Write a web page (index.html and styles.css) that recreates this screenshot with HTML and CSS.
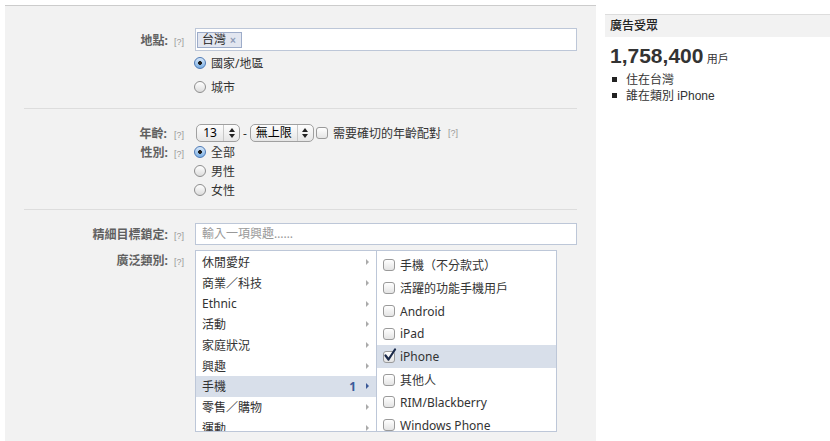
FILE: index.html
```html
<!DOCTYPE html>
<html lang="zh-Hant">
<head>
    <meta charset="UTF-8">
    <meta name="viewport" content="width=device-width, initial-scale=1.0">
    <title>廣告目標設定</title>
    <link rel="stylesheet" href="styles.css">
</head>
<body>

<div class="page">
    <div class="main">

        <!-- 地點 -->
        <div class="section sec-loc">
            <div class="row">
                <div class="lbl"><span class="name">地點:</span><span class="help">[?]</span></div>
                <div class="tokenbox">
                    <span class="token">台灣<span class="x">×</span></span>
                </div>
            </div>
            <div class="row loc-opt">
                <div class="lbl"></div>
                <span class="radio on"></span><span class="opt-text">國家/地區</span>
            </div>
            <div class="row loc-opt">
                <div class="lbl"></div>
                <span class="radio"></span><span class="opt-text">城市</span>
            </div>
        </div>

        <!-- 年齡 / 性別 -->
        <div class="section sec-age">
            <div class="row age-row">
                <div class="lbl"><span class="name">年齡:</span><span class="help">[?]</span></div>
                <div class="select s-min">
                    <span class="val">13</span>
                    <span class="arr"><svg width="6" height="10" viewBox="0 0 6 10"><polygon points="0,4 3,0 6,4" fill="#222"/><polygon points="0,6 3,10 6,6" fill="#222"/></svg></span>
                </div>
                <span class="dash">-</span>
                <div class="select s-max">
                    <span class="val">無上限</span>
                    <span class="arr"><svg width="6" height="10" viewBox="0 0 6 10"><polygon points="0,4 3,0 6,4" fill="#222"/><polygon points="0,6 3,10 6,6" fill="#222"/></svg></span>
                </div>
                <span class="check age-check"></span>
                <span class="age-text">需要確切的年齡配對</span>
                <span class="help">[?]</span>
            </div>
            <div class="row gender-row">
                <div class="lbl"><span class="name">性別:</span><span class="help">[?]</span></div>
                <span class="radio on"></span><span class="opt-text">全部</span>
            </div>
            <div class="row gender-row">
                <div class="lbl"></div>
                <span class="radio"></span><span class="opt-text">男性</span>
            </div>
            <div class="row gender-row">
                <div class="lbl"></div>
                <span class="radio"></span><span class="opt-text">女性</span>
            </div>
        </div>

        <!-- 興趣 / 類別 -->
        <div class="section sec-interest">
            <div class="row">
                <div class="lbl"><span class="name">精細目標鎖定:</span><span class="help">[?]</span></div>
                <div class="textbox">輸入一項興趣……</div>
            </div>
            <div class="row cats-row">
                <div class="lbl"><span class="name">廣泛類別:</span><span class="help">[?]</span></div>
                <div class="list cat-list">
                    <div class="cat"><span class="cat-name">休閒愛好</span><i class="tri"></i></div>
                    <div class="cat"><span class="cat-name">商業／科技</span><i class="tri"></i></div>
                    <div class="cat"><span class="cat-name">Ethnic</span><i class="tri"></i></div>
                    <div class="cat"><span class="cat-name">活動</span><i class="tri"></i></div>
                    <div class="cat"><span class="cat-name">家庭狀況</span><i class="tri"></i></div>
                    <div class="cat"><span class="cat-name">興趣</span><i class="tri"></i></div>
                    <div class="cat sel"><span class="cat-name">手機</span><b class="count">1</b><i class="tri"></i></div>
                    <div class="cat"><span class="cat-name">零售／購物</span><i class="tri"></i></div>
                    <div class="cat"><span class="cat-name">運動</span><i class="tri"></i></div>
                </div>
                <div class="list sub-list">
                    <div class="sub"><span class="check"></span><span>手機（不分款式）</span></div>
                    <div class="sub"><span class="check"></span><span>活躍的功能手機用戶</span></div>
                    <div class="sub"><span class="check"></span><span>Android</span></div>
                    <div class="sub"><span class="check"></span><span>iPad</span></div>
                    <div class="sub sel">
                        <span class="check checked"><svg width="14" height="14" viewBox="0 0 14 14"><path d="M2.5 7.5 L5.5 11.5 L12 1.5" fill="none" stroke="#1b2a4a" stroke-width="2.2" stroke-linecap="round" stroke-linejoin="round"/></svg></span>
                        <span>iPhone</span>
                    </div>
                    <div class="sub"><span class="check"></span><span>其他人</span></div>
                    <div class="sub"><span class="check"></span><span>RIM/Blackberry</span></div>
                    <div class="sub"><span class="check"></span><span>Windows Phone</span></div>
                </div>
            </div>
        </div>

    </div>

    <div class="side">
        <div class="side-head">廣告受眾</div>
        <div class="reach"><span class="num">1,758,400</span> <span class="unit">用戶</span></div>
        <ul class="crit">
            <li>住在台灣</li>
            <li>誰在類別 iPhone</li>
        </ul>
    </div>
</div>

</body>
</html>
```

FILE: styles.css
```css
body {
    margin: 0;
    background-color: #fff;
    font-family: "Noto Sans", "Noto Sans CJK TC", sans-serif;
    font-size: 12px;
    color: #333;
}
.page {
    display: flex;
    height: 441px;
    overflow: hidden;
}
.main {
    width: 591px;
    flex: none;
    margin: 5px 0 0 5px;
    background-color: #f2f2f2;
    border-top: 1px solid #ccc;
}
.section {
    margin: 0 19px;
    border-bottom: 1px solid #ddd;
}
.row {
    display: flex;
    align-items: center;
}
.lbl {
    width: 170px;
    flex: none;
    box-sizing: border-box;
    padding-right: 10px;
    text-align: right;
    white-space: nowrap;
}
.name {
    font-weight: bold;
    color: #606060;
}
.help {
    margin-left: 6px;
    font-family: "Liberation Sans", sans-serif;
    font-size: 9px;
    color: #999;
}

/* location */
.sec-loc {
    padding: 22px 0 9px;
}
.tokenbox {
    width: 382px;
    height: 23px;
    margin-left: 1px;
    box-sizing: border-box;
    border: 1px solid #bdc7d8;
    background-color: #fff;
    display: flex;
    align-items: center;
    padding-left: 1px;
}
.token {
    height: 16px;
    box-sizing: border-box;
    border: 1px solid #9dacc9;
    background-color: #e2e6f0;
    padding: 0 5px 0 4px;
    line-height: 14px;
    color: #222;
}
.token .x {
    margin-left: 4px;
    font-family: "Liberation Sans", sans-serif;
    font-size: 10px;
    font-weight: bold;
    color: #8d9ab5;
}
.loc-opt {
    height: 24px;
}
.opt-text {
    margin-left: 5px;
    color: #333;
}

/* radios and checkboxes */
.radio {
    width: 12px;
    height: 12px;
    flex: none;
    box-sizing: border-box;
    border-radius: 50%;
    border: 1px solid #8e8e8e;
    background: linear-gradient(#fff, #dcdcdc);
}
.radio.on {
    border-color: #4d79b5;
    background: radial-gradient(circle, #1e1e1e 0 1.6px, transparent 2.2px), linear-gradient(#d7e8fa, #7aaee3);
}
.check {
    position: relative;
    width: 12px;
    height: 12px;
    flex: none;
    box-sizing: border-box;
    border: 1px solid #9a9a9a;
    border-radius: 3px;
    background: linear-gradient(#fff, #e4e4e4);
}
.check svg {
    position: absolute;
    left: -1px;
    top: -4px;
}

/* age */
.sec-age {
    padding: 15px 0 10px;
}
.age-row {
    height: 18px;
}
.select {
    height: 18px;
    box-sizing: border-box;
    display: flex;
    align-items: stretch;
    border: 1px solid #a0a0a0;
    border-radius: 5px;
    background: linear-gradient(#fdfdfd, #e6e6e6);
    color: #000;
}
.select .val {
    flex: 1;
    text-align: center;
    line-height: 16px;
    border-right: 1px solid #c8c8c8;
}
.select .arr {
    width: 15px;
    display: flex;
    align-items: center;
    justify-content: center;
}
.s-min {
    width: 44px;
    margin-left: 2px;
}
.s-max {
    width: 64px;
}
.dash {
    margin: 0 3px;
    color: #333;
}
.age-check {
    margin-left: 2px;
}
.age-text {
    margin-left: 5px;
    color: #333;
}
.age-row .help {
    margin-left: 7px;
}
.gender-row {
    height: 19px;
}

/* interests */
.sec-interest {
    padding-top: 13px;
    border-bottom: none;
}
.textbox {
    width: 382px;
    height: 22px;
    margin-left: 1px;
    box-sizing: border-box;
    border: 1px solid #bdc7d8;
    background-color: #fff;
    padding-left: 6px;
    line-height: 20px;
    color: #999;
}
.cats-row {
    align-items: flex-start;
    margin-top: 5px;
}
.cats-row .lbl {
    line-height: 20px;
    padding-top: 1px;
}
.list {
    height: 182px;
    box-sizing: border-box;
    border: 1px solid #bdc7d8;
    background-color: #fff;
    overflow: hidden;
}
.cat-list {
    width: 182px;
    margin-left: 1px;
    padding-top: 1px;
}
.cat {
    height: 20.7px;
    display: flex;
    align-items: center;
    padding: 0 7px 0 6px;
    color: #333;
}
.cat-name {
    flex: 1;
}
.tri {
    width: 0;
    height: 0;
    border-left: 3px solid #aaa;
    border-top: 3px solid transparent;
    border-bottom: 3px solid transparent;
}
.cat.sel {
    background-color: #d8dfea;
}
.cat.sel .tri {
    border-left-color: #3b5998;
}
.count {
    margin-right: 10px;
    color: #3b5998;
}
.sub-list {
    width: 181px;
    margin-left: -1px;
    padding-top: 3px;
}
.sub {
    height: 22.85px;
    display: flex;
    align-items: center;
    padding-left: 6px;
    color: #333;
}
.sub .check {
    margin-right: 5px;
}
.sub.sel {
    background-color: #d8dfea;
}

/* audience panel */
.side {
    flex: 1;
    padding: 14px 0 0 9px;
    font-family: "Liberation Sans", "Noto Sans CJK TC", sans-serif;
}
.side-head {
    height: 22px;
    border-top: 1px solid #ddd;
    background-color: #f2f2f2;
    padding-left: 5px;
    line-height: 22px;
    font-weight: 500;
    color: #222;
}
.reach {
    margin-top: 6px;
    height: 26px;
    line-height: 26px;
    padding-left: 5px;
    color: #333;
}
.num {
    font-size: 21px;
    font-weight: bold;
}
.unit {
    font-size: 11px;
}
.crit {
    list-style: none;
    margin: 3px 0 0;
    padding: 0 0 0 7px;
    line-height: 16px;
    color: #333;
}
.crit li::before {
    content: "";
    display: inline-block;
    width: 5px;
    height: 5px;
    margin: 0 9px 2px 0;
    background-color: #222;
    vertical-align: middle;
}
```
